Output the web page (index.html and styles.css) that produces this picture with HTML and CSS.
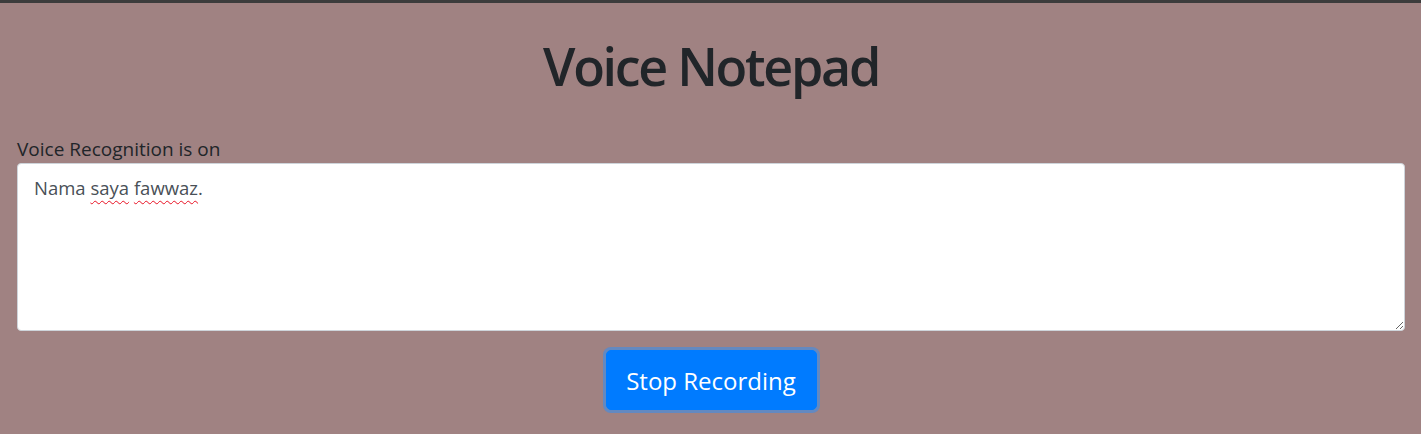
FILE: index.html
```html
<!DOCTYPE html>
<html lang="en">
<head>
<meta charset="utf-8">
<title>Voice Notepad</title>
<link rel="stylesheet" href="styles.css">
</head>
<body>
<div class="topbar"></div>
<main class="page">
  <h1 class="title">Voice Notepad</h1>
  <div class="field">
    <label class="status" for="note">Voice Recognition is on</label>
    <div class="note" id="note" role="textbox" aria-multiline="true">Nama <span class="typo">saya</span> <span class="typo">fawwaz</span>.</div>
  </div>
  <div class="actions">
    <button class="btn" type="button">Stop Recording</button>
  </div>
</main>
</body>
</html>
```
FILE: styles.css
```css
html, body {
  margin: 0;
  padding: 0;
}
body {
  background: #a08282;
  font-family: "Open Sans", "Noto Sans", sans-serif;
  color: #212529;
  height: 434px;
  overflow: hidden;
}
.topbar {
  height: 3px;
  background: #3c3c3c;
}
.page {
  padding: 0 16px 0 17px;
}
.title {
  margin: 31px 0 0;
  text-align: center;
  font-size: 52px;
  font-weight: 600;
  letter-spacing: -2.3px;
  line-height: 64px;
  color: #212529;
}
.field {
  margin-top: 38px;
  display: flex;
  flex-direction: column;
}
.status {
  font-size: 19px;
  line-height: 27px;
  color: #212529;
}
.note {
  box-sizing: border-box;
  height: 168px;
  background: #fff;
  border: 1px solid #ced4da;
  border-radius: 4px;
  padding: 10px 16px;
  font-size: 18.5px;
  line-height: 27px;
  color: #495057;
  resize: vertical;
  overflow: auto;
}
.typo {
  text-decoration: underline wavy #e81123;
  text-decoration-thickness: 1px;
  text-underline-offset: 5px;
}
.actions {
  display: flex;
  justify-content: center;
  margin-top: 19px;
}
.btn {
  width: 211px;
  height: 60px;
  background: #007bff;
  color: #fff;
  border: 1px solid #007bff;
  border-radius: 5px;
  font-family: "Open Sans", "Noto Sans", sans-serif;
  font-size: 24px;
  box-shadow: 0 0 0 3px rgba(38, 143, 255, 0.5);
  cursor: pointer;
}
```
